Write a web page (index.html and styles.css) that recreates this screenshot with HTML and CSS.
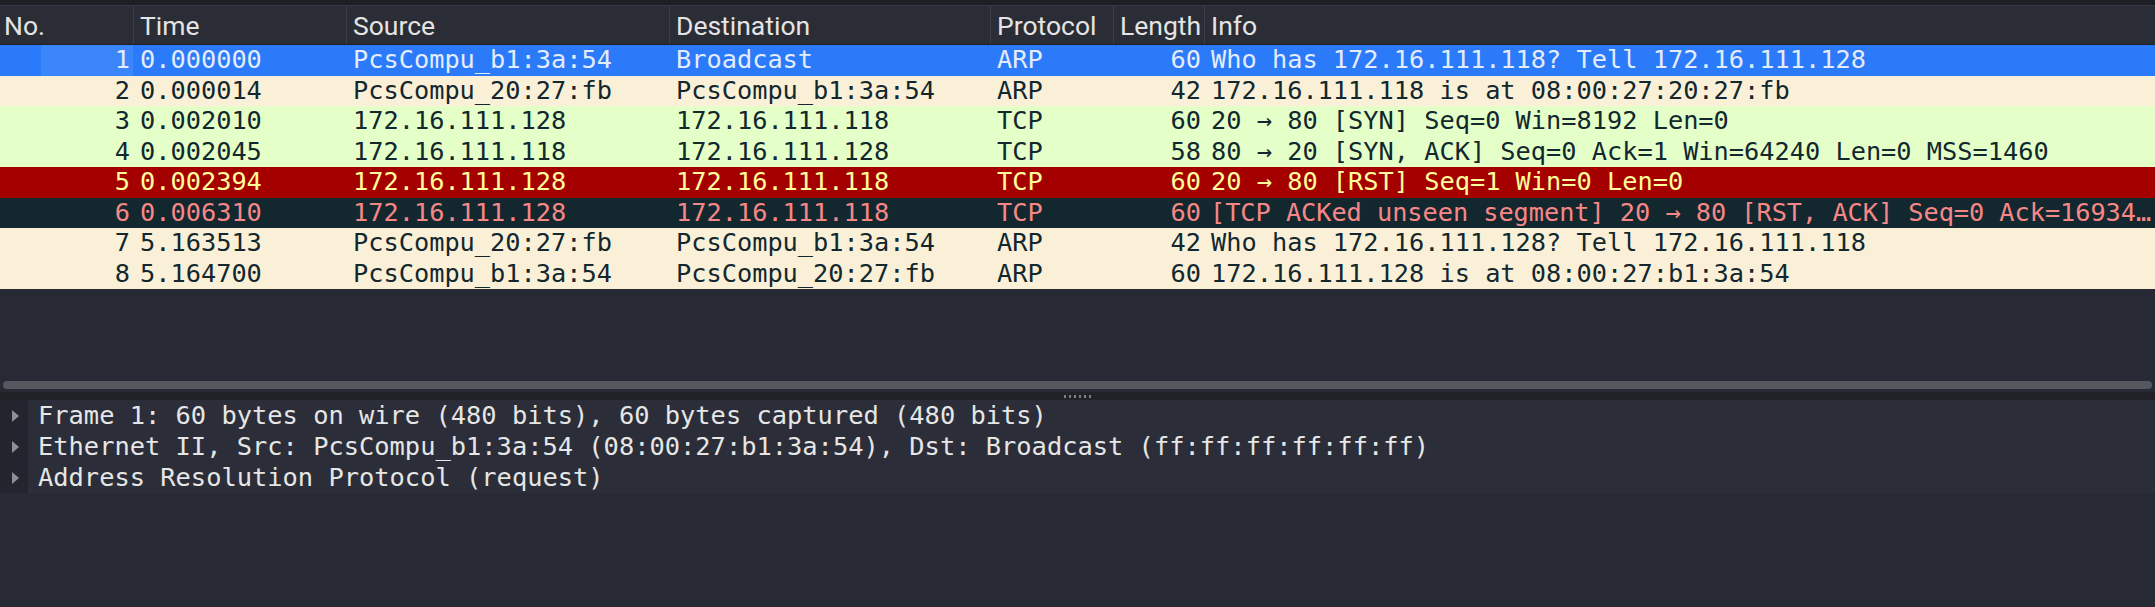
FILE: index.html
```html
<!DOCTYPE html>
<html>
<head>
<meta charset="utf-8">
<link rel="stylesheet" href="styles.css">
</head>
<body>
<div class="app">
  <div class="topbar"></div>
  <div class="packet-list">
    <div class="row header">
      <div class="cell">No.</div>
      <div class="cell">Time</div>
      <div class="cell">Source</div>
      <div class="cell">Destination</div>
      <div class="cell">Protocol</div>
      <div class="cell">Length</div>
      <div class="cell">Info</div>
    </div>
    <div class="row pkt selected">
      <div class="cell num focus">1</div><div class="cell">0.000000</div><div class="cell">PcsCompu_b1:3a:54</div><div class="cell">Broadcast</div><div class="cell">ARP</div><div class="cell num">60</div><div class="cell">Who has 172.16.111.118? Tell 172.16.111.128</div>
    </div>
    <div class="row pkt arp">
      <div class="cell num">2</div><div class="cell">0.000014</div><div class="cell">PcsCompu_20:27:fb</div><div class="cell">PcsCompu_b1:3a:54</div><div class="cell">ARP</div><div class="cell num">42</div><div class="cell">172.16.111.118 is at 08:00:27:20:27:fb</div>
    </div>
    <div class="row pkt tcp">
      <div class="cell num">3</div><div class="cell">0.002010</div><div class="cell">172.16.111.128</div><div class="cell">172.16.111.118</div><div class="cell">TCP</div><div class="cell num">60</div><div class="cell">20 → 80 [SYN] Seq=0 Win=8192 Len=0</div>
    </div>
    <div class="row pkt tcp">
      <div class="cell num">4</div><div class="cell">0.002045</div><div class="cell">172.16.111.118</div><div class="cell">172.16.111.128</div><div class="cell">TCP</div><div class="cell num">58</div><div class="cell">80 → 20 [SYN, ACK] Seq=0 Ack=1 Win=64240 Len=0 MSS=1460</div>
    </div>
    <div class="row pkt rst">
      <div class="cell num">5</div><div class="cell">0.002394</div><div class="cell">172.16.111.128</div><div class="cell">172.16.111.118</div><div class="cell">TCP</div><div class="cell num">60</div><div class="cell">20 → 80 [RST] Seq=1 Win=0 Len=0</div>
    </div>
    <div class="row pkt bad">
      <div class="cell num">6</div><div class="cell">0.006310</div><div class="cell">172.16.111.128</div><div class="cell">172.16.111.118</div><div class="cell">TCP</div><div class="cell num">60</div><div class="cell info-tight">[TCP ACKed unseen segment] 20 → 80 [RST, ACK] Seq=0 Ack=16934…</div>
    </div>
    <div class="row pkt arp">
      <div class="cell num">7</div><div class="cell">5.163513</div><div class="cell">PcsCompu_20:27:fb</div><div class="cell">PcsCompu_b1:3a:54</div><div class="cell">ARP</div><div class="cell num">42</div><div class="cell">Who has 172.16.111.128? Tell 172.16.111.118</div>
    </div>
    <div class="row pkt arp">
      <div class="cell num">8</div><div class="cell">5.164700</div><div class="cell">PcsCompu_b1:3a:54</div><div class="cell">PcsCompu_20:27:fb</div><div class="cell">ARP</div><div class="cell num">60</div><div class="cell">172.16.111.128 is at 08:00:27:b1:3a:54</div>
    </div>
    <div class="list-empty"></div>
    <div class="hscroll"><div class="thumb"></div></div>
  </div>
  <div class="splitter"><span class="grip"></span></div>
  <div class="details">
    <div class="tree">
      <div class="node"><span class="arrow"></span><span class="label">Frame 1: 60 bytes on wire (480 bits), 60 bytes captured (480 bits)</span></div>
      <div class="node"><span class="arrow"></span><span class="label">Ethernet II, Src: PcsCompu_b1:3a:54 (08:00:27:b1:3a:54), Dst: Broadcast (ff:ff:ff:ff:ff:ff)</span></div>
      <div class="node"><span class="arrow"></span><span class="label">Address Resolution Protocol (request)</span></div>
    </div>
  </div>
</div>
</body>
</html>
```

FILE: styles.css
```css
html, body {
  margin: 0;
  padding: 0;
  background: #272a34;
  width: 2155px;
  height: 607px;
  overflow: hidden;
}

.app {
  display: flex;
  flex-direction: column;
  height: 607px;
}

.topbar {
  height: 6px;
  background: #1d1f25;
  border-bottom: 1px solid #33363e;
  box-sizing: border-box;
}

.packet-list {
  display: flex;
  flex-direction: column;
  height: 386px;
  background: #272a34;
}

.row {
  display: grid;
  grid-template-columns: 133px 213px 323px 321px 123px 91px 1fr;
}

.header {
  height: 38px;
  background: #2a2d35;
  border-bottom: 1px solid #1e2026;
  font-family: Roboto, "Liberation Sans", sans-serif;
  font-size: 26.5px;
  color: #e4e4e4;
}

.header .cell {
  line-height: 38px;
  padding-top: 1px;
  padding-left: 6px;
  border-left: 1px solid #3b3e46;
}

.header .cell:first-child {
  border-left: none;
  padding-left: 4px;
}

.cell {
  white-space: nowrap;
  overflow: hidden;
  padding-left: 7px;
}

.pkt {
  height: 30.5px;
  font-family: "DejaVu Sans Mono", monospace;
  font-size: 25.3px;
  line-height: 30.5px;
  color: #12272e;
}

.pkt .cell.num {
  text-align: right;
  padding-left: 0;
  padding-right: 3px;
}

.pkt .cell.info-tight {
  padding-left: 6px;
  letter-spacing: -0.05px;
}

.selected {
  background: #2a7af9;
  color: #e4ecfb;
}

.selected .focus {
  background: linear-gradient(to right, transparent 41px, #3a86fa 41px);
}

.arp {
  background: #faf0d7;
}

.tcp {
  background: #e4ffc7;
}

.rst {
  background: #a40000;
  color: #fffc9c;
}

.bad {
  background: #12272e;
  color: #f78787;
}

.list-empty {
  flex: 1;
}

.hscroll {
  height: 14px;
  padding: 3px 3px;
  box-sizing: border-box;
  background: #272a34;
}

.hscroll .thumb {
  height: 8px;
  border-radius: 4px;
  background: #55585f;
}

.splitter {
  height: 8px;
  background: #202228;
  display: flex;
  justify-content: center;
  align-items: center;
}

.grip {
  width: 28px;
  height: 3px;
  background: repeating-linear-gradient(to right, #7a7d84 0 2px, transparent 2px 5px);
}

.details {
  flex: 1;
  background: #272a34;
}

.tree {
  font-family: "DejaVu Sans Mono", monospace;
  font-size: 25.4px;
  color: #e6e6e6;
}

.node {
  display: flex;
  align-items: center;
  height: 31px;
}

.arrow {
  width: 28px;
  height: 31px;
  flex: none;
  background: #23252e;
  display: flex;
  align-items: center;
  justify-content: flex-start;
}

.arrow::before {
  content: "";
  margin-left: 12px;
  border-left: 7px solid #8d9097;
  border-top: 6px solid transparent;
  border-bottom: 6px solid transparent;
}

.label {
  flex: 1;
  height: 31px;
  line-height: 31px;
  padding-left: 10px;
  background: #2b2e38;
  white-space: nowrap;
}
```
